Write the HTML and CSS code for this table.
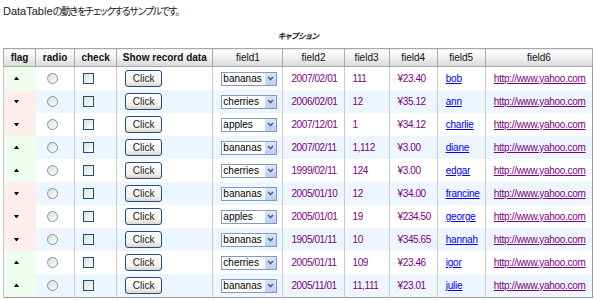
FILE: index.html
```html
<!DOCTYPE html>
<html lang="ja">
<head>
    <meta charset="UTF-8">
    <title>DataTable sample</title>
    <link rel="stylesheet" href="styles.css">
</head>
<body>
    <p class="intro">DataTable<span class="jp">の動きをチェックするサンプルです。</span></p>

    <!-- sample data table -->
    <table class="data">
        <caption>キャプション</caption>
        <colgroup>
            <col class="c-flag"><col class="c-radio"><col class="c-check"><col class="c-show">
            <col class="c-f1"><col class="c-f2"><col class="c-f3"><col class="c-f4"><col class="c-f5"><col class="c-f6">
        </colgroup>
        <thead>
            <tr>
                <th class="b">flag</th>
                <th class="b">radio</th>
                <th class="b">check</th>
                <th class="b">Show record data</th>
                <th>field1</th>
                <th>field2</th>
                <th>field3</th>
                <th>field4</th>
                <th>field5</th>
                <th>field6</th>
            </tr>
        </thead>
        <tbody>
            <tr>
                <td class="flag up"><i></i></td>
                <td class="rd"><input type="radio" name="r"></td>
                <td><input type="checkbox"></td>
                <td><button class="btn">Click</button></td>
                <td><span class="pick"><select><option>apples</option><option selected>bananas</option><option>cherries</option></select><span class="drop"><svg width="7" height="5" viewBox="0 0 7 5"><path d="M1 1 L3.5 3.5 L6 1" stroke="#4d6185" stroke-width="1.6" fill="none"/></svg></span></span></td>
                <td class="val">2007/02/01</td>
                <td class="val">111</td>
                <td class="val">¥23.40</td>
                <td><a href="#" class="name">bob</a></td>
                <td><a href="#" class="url">http://www.yahoo.com</a></td>
            </tr>
            <tr class="alt">
                <td class="flag down"><i></i></td>
                <td class="rd"><input type="radio" name="r"></td>
                <td><input type="checkbox"></td>
                <td><button class="btn">Click</button></td>
                <td><span class="pick"><select><option>apples</option><option>bananas</option><option selected>cherries</option></select><span class="drop"><svg width="7" height="5" viewBox="0 0 7 5"><path d="M1 1 L3.5 3.5 L6 1" stroke="#4d6185" stroke-width="1.6" fill="none"/></svg></span></span></td>
                <td class="val">2006/02/01</td>
                <td class="val">12</td>
                <td class="val">¥35.12</td>
                <td><a href="#" class="name">ann</a></td>
                <td><a href="#" class="url">http://www.yahoo.com</a></td>
            </tr>
            <tr>
                <td class="flag down"><i></i></td>
                <td class="rd"><input type="radio" name="r"></td>
                <td><input type="checkbox"></td>
                <td><button class="btn">Click</button></td>
                <td><span class="pick"><select><option selected>apples</option><option>bananas</option><option>cherries</option></select><span class="drop"><svg width="7" height="5" viewBox="0 0 7 5"><path d="M1 1 L3.5 3.5 L6 1" stroke="#4d6185" stroke-width="1.6" fill="none"/></svg></span></span></td>
                <td class="val">2007/12/01</td>
                <td class="val">1</td>
                <td class="val">¥34.12</td>
                <td><a href="#" class="name">charlie</a></td>
                <td><a href="#" class="url">http://www.yahoo.com</a></td>
            </tr>
            <tr class="alt">
                <td class="flag up"><i></i></td>
                <td class="rd"><input type="radio" name="r"></td>
                <td><input type="checkbox"></td>
                <td><button class="btn">Click</button></td>
                <td><span class="pick"><select><option>apples</option><option selected>bananas</option><option>cherries</option></select><span class="drop"><svg width="7" height="5" viewBox="0 0 7 5"><path d="M1 1 L3.5 3.5 L6 1" stroke="#4d6185" stroke-width="1.6" fill="none"/></svg></span></span></td>
                <td class="val">2007/02/11</td>
                <td class="val">1,112</td>
                <td class="val">¥3.00</td>
                <td><a href="#" class="name">diane</a></td>
                <td><a href="#" class="url">http://www.yahoo.com</a></td>
            </tr>
            <tr>
                <td class="flag up"><i></i></td>
                <td class="rd"><input type="radio" name="r"></td>
                <td><input type="checkbox"></td>
                <td><button class="btn">Click</button></td>
                <td><span class="pick"><select><option>apples</option><option>bananas</option><option selected>cherries</option></select><span class="drop"><svg width="7" height="5" viewBox="0 0 7 5"><path d="M1 1 L3.5 3.5 L6 1" stroke="#4d6185" stroke-width="1.6" fill="none"/></svg></span></span></td>
                <td class="val">1999/02/11</td>
                <td class="val">124</td>
                <td class="val">¥3.00</td>
                <td><a href="#" class="name">edgar</a></td>
                <td><a href="#" class="url">http://www.yahoo.com</a></td>
            </tr>
            <tr class="alt">
                <td class="flag down"><i></i></td>
                <td class="rd"><input type="radio" name="r"></td>
                <td><input type="checkbox"></td>
                <td><button class="btn">Click</button></td>
                <td><span class="pick"><select><option>apples</option><option selected>bananas</option><option>cherries</option></select><span class="drop"><svg width="7" height="5" viewBox="0 0 7 5"><path d="M1 1 L3.5 3.5 L6 1" stroke="#4d6185" stroke-width="1.6" fill="none"/></svg></span></span></td>
                <td class="val">2005/01/10</td>
                <td class="val">12</td>
                <td class="val">¥34.00</td>
                <td><a href="#" class="name">francine</a></td>
                <td><a href="#" class="url">http://www.yahoo.com</a></td>
            </tr>
            <tr>
                <td class="flag down"><i></i></td>
                <td class="rd"><input type="radio" name="r"></td>
                <td><input type="checkbox"></td>
                <td><button class="btn">Click</button></td>
                <td><span class="pick"><select><option selected>apples</option><option>bananas</option><option>cherries</option></select><span class="drop"><svg width="7" height="5" viewBox="0 0 7 5"><path d="M1 1 L3.5 3.5 L6 1" stroke="#4d6185" stroke-width="1.6" fill="none"/></svg></span></span></td>
                <td class="val">2005/01/01</td>
                <td class="val">19</td>
                <td class="val">¥234.50</td>
                <td><a href="#" class="name">george</a></td>
                <td><a href="#" class="url">http://www.yahoo.com</a></td>
            </tr>
            <tr class="alt">
                <td class="flag down"><i></i></td>
                <td class="rd"><input type="radio" name="r"></td>
                <td><input type="checkbox"></td>
                <td><button class="btn">Click</button></td>
                <td><span class="pick"><select><option>apples</option><option selected>bananas</option><option>cherries</option></select><span class="drop"><svg width="7" height="5" viewBox="0 0 7 5"><path d="M1 1 L3.5 3.5 L6 1" stroke="#4d6185" stroke-width="1.6" fill="none"/></svg></span></span></td>
                <td class="val">1905/01/11</td>
                <td class="val">10</td>
                <td class="val">¥345.65</td>
                <td><a href="#" class="name">hannah</a></td>
                <td><a href="#" class="url">http://www.yahoo.com</a></td>
            </tr>
            <tr>
                <td class="flag up"><i></i></td>
                <td class="rd"><input type="radio" name="r"></td>
                <td><input type="checkbox"></td>
                <td><button class="btn">Click</button></td>
                <td><span class="pick"><select><option>apples</option><option>bananas</option><option selected>cherries</option></select><span class="drop"><svg width="7" height="5" viewBox="0 0 7 5"><path d="M1 1 L3.5 3.5 L6 1" stroke="#4d6185" stroke-width="1.6" fill="none"/></svg></span></span></td>
                <td class="val">2005/01/11</td>
                <td class="val">109</td>
                <td class="val">¥23.46</td>
                <td><a href="#" class="name">igor</a></td>
                <td><a href="#" class="url">http://www.yahoo.com</a></td>
            </tr>
            <tr class="alt">
                <td class="flag up"><i></i></td>
                <td class="rd"><input type="radio" name="r"></td>
                <td><input type="checkbox"></td>
                <td><button class="btn">Click</button></td>
                <td><span class="pick"><select><option>apples</option><option selected>bananas</option><option>cherries</option></select><span class="drop"><svg width="7" height="5" viewBox="0 0 7 5"><path d="M1 1 L3.5 3.5 L6 1" stroke="#4d6185" stroke-width="1.6" fill="none"/></svg></span></span></td>
                <td class="val">2005/11/01</td>
                <td class="val">11,111</td>
                <td class="val">¥23.01</td>
                <td><a href="#" class="name">julie</a></td>
                <td><a href="#" class="url">http://www.yahoo.com</a></td>
            </tr>
        </tbody>
    </table>
</body>
</html>
```

FILE: styles.css
```css
/* Page basics */
body {
    margin: 0;
    padding: 5px 3px 0;
    font-family: "Liberation Sans", "Noto Sans CJK JP", sans-serif;
    font-size: 11px;
    color: #000;
    background: #fff;
}

.intro {
    margin: 0;
    line-height: 13px;
    color: #222;
}

/* proportional kana, closer to the old Japanese UI font */
.jp {
    font-size: 10px;
    letter-spacing: -1.3px;
    font-feature-settings: "palt";
}

/* Table */
.data {
    margin-top: 14px;
    width: 590px;
    table-layout: fixed;
    border-collapse: collapse;
    border: 1px solid #999;
    font-size: 10px;
}

.data caption {
    font-size: 8px;
    font-weight: bold;
    font-style: italic;
    line-height: 10px;
    padding-bottom: 6px;
    letter-spacing: -0.3px;
    color: #222;
    font-feature-settings: "palt";
}

.c-flag { width: 32px; }
.c-radio { width: 39px; }
.c-check { width: 42px; }
.c-show { width: 96px; }
.c-f1 { width: 70px; }
.c-f2 { width: 61px; }
.c-f3 { width: 45px; }
.c-f4 { width: 48px; }
.c-f5 { width: 48px; }
.c-f6 { width: 107px; }

/* Header cells */
.data th {
    height: 17px;
    padding: 0;
    border: 1px solid #a8a8a8;
    background: linear-gradient(#ffffff, #f4f4f4 40%, #d9d9d9);
    font-weight: normal;
    text-align: center;
    white-space: nowrap;
    color: #111;
}

.data th.b {
    font-weight: bold;
}

/* Body cells */
.data td {
    height: 23px;
    padding: 0 0 0 8px;
    border-left: 1px solid #cbcbcb;
    vertical-align: middle;
    white-space: nowrap;
    overflow: hidden;
}

.data tr.alt td {
    background-color: #edf5ff;
}

.data td.rd {
    border-left: none;
    padding-left: 11px;
}

.data td.flag {
    padding-left: 10px;
}

.data tr td.up {
    background-color: #effdef;
}

.data tr td.down {
    background-color: #fdeeee;
}

/* little sort arrows in the flag column */
.flag i {
    display: block;
    width: 1px;
    height: 0;
    border-left: 2px solid transparent;
    border-right: 2px solid transparent;
}

.up i {
    border-bottom: 3px solid #000;
}

.down i {
    border-top: 3px solid #000;
}

.val {
    color: #800080;
    letter-spacing: -0.4px;
}

.name {
    color: #0000ff;
    letter-spacing: -0.2px;
}

.url {
    color: #800080;
    letter-spacing: -0.3px;
}

/* XP style form controls */
input[type="radio"] {
    appearance: none;
    display: block;
    width: 11px;
    height: 11px;
    margin: 0;
    border: 1px solid #7896b8;
    border-radius: 50%;
    background: linear-gradient(135deg, #dcdcd6, #ffffff);
}

input[type="checkbox"] {
    appearance: none;
    display: block;
    width: 11px;
    height: 11px;
    margin: 0;
    border: 1px solid #1c5180;
    background: linear-gradient(135deg, #dcdcd7, #ffffff);
}

.btn {
    display: block;
    width: 37px;
    height: 17px;
    padding: 0;
    border: 1px solid #1f4f86;
    border-radius: 3px;
    background: linear-gradient(#ffffff, #f3f2ee 70%, #dcd7cc);
    font-family: "Liberation Sans", sans-serif;
    font-size: 10px;
    color: #222;
}

.pick {
    position: relative;
    display: block;
    width: 56px;
    height: 14px;
}

.pick select {
    appearance: none;
    display: block;
    width: 56px;
    height: 14px;
    margin: 0;
    padding: 0 0 0 1px;
    border: 1px solid #7f9db9;
    border-radius: 0;
    background: #fff;
    font-family: "Liberation Sans", sans-serif;
    font-size: 10px;
    line-height: 12px;
    color: #000;
}

.drop {
    position: absolute;
    top: 1px;
    right: 1px;
    width: 11px;
    height: 12px;
    display: flex;
    align-items: center;
    justify-content: center;
    background: linear-gradient(#dbe6fd, #b9cdf6);
    pointer-events: none;
}
```
